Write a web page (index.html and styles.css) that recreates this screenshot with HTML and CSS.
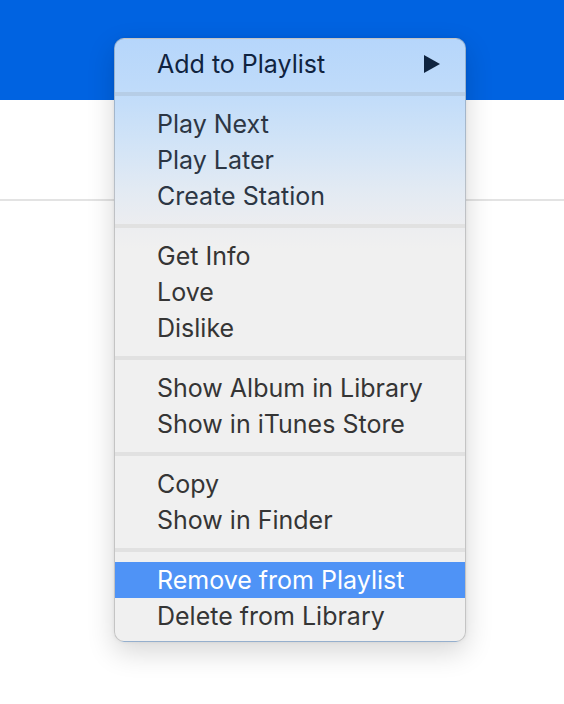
FILE: index.html
```html
<!DOCTYPE html>
<html lang="en">
<head>
  <meta charset="UTF-8" />
  <title>Context Menu</title>
  <link rel="stylesheet" href="styles.css">
</head>
<body>

  <!-- Window behind the menu -->
  <div class="toolbar"></div>
  <div class="header-row"></div>

  <!-- Context Menu -->
  <ul class="menu">
    <li class="item">
      <span>Add to Playlist</span>
      <svg class="arrow" width="18" height="20" viewBox="0 0 18 20"><path d="M1 1 L17 10 L1 19 Z" fill="#0f2440"/></svg>
    </li>
    <li class="sep"></li>
    <li class="item">Play Next</li>
    <li class="item">Play Later</li>
    <li class="item">Create Station</li>
    <li class="sep"></li>
    <li class="item">Get Info</li>
    <li class="item">Love</li>
    <li class="item">Dislike</li>
    <li class="sep"></li>
    <li class="item">Show Album in Library</li>
    <li class="item">Show in iTunes Store</li>
    <li class="sep"></li>
    <li class="item">Copy</li>
    <li class="item">Show in Finder</li>
    <li class="sep"></li>
    <li class="item active">Remove from Playlist</li>
    <li class="item">Delete from Library</li>
  </ul>

</body>
</html>
```

FILE: styles.css
```css
body {
  margin: 0;
  padding: 0;
  background: #ffffff;
  font-family: 'Inter', 'Liberation Sans', sans-serif;
  width: 564px;
  height: 704px;
  overflow: hidden;
  position: relative;
}

.toolbar {
  height: 100px;
  background: #0063e1;
}

.header-row {
  height: 99px;
  border-bottom: 2px solid #e3e3e3;
}

.menu {
  position: absolute;
  left: 114px;
  top: 38px;
  width: 352px;
  margin: 0;
  padding: 7px 0;
  list-style: none;
  box-sizing: border-box;
  border-radius: 10px;
  border: 1px solid rgba(0, 0, 0, 0.18);
  background: linear-gradient(to bottom,
    #b6d6fb 0px,
    #bfdbfa 50px,
    #d0e3f7 100px,
    #e2eaf3 150px,
    #ecedf0 185px,
    #f0f0f0 210px,
    #f0f0f0 100%);
  box-shadow: 0 10px 28px rgba(0, 0, 0, 0.16), 0 0 4px rgba(0, 0, 0, 0.06);
  overflow: hidden;
}

.item {
  height: 36px;
  display: flex;
  align-items: center;
  justify-content: space-between;
  padding: 0 24px 0 42px;
  font-size: 25px;
  color: #353535;
  white-space: nowrap;
}

.item:first-child {
  color: #10233f;
}

.menu .item:nth-child(3),
.menu .item:nth-child(4),
.menu .item:nth-child(5) {
  color: #2c3644;
}

.item.active {
  background: #4f93f6;
  color: #ffffff;
}

.arrow {
  display: block;
}

.sep {
  height: 24px;
  display: flex;
  align-items: center;
}

.sep::before {
  content: "";
  display: block;
  width: 100%;
  height: 4px;
  background: #e1e1e1;
}

.menu .sep:nth-child(2)::before {
  background: #b6cde6;
}
```
